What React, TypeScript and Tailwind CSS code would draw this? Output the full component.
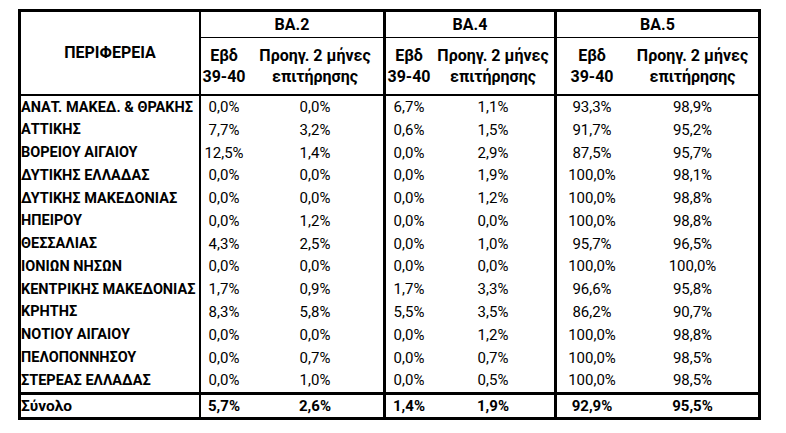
import React from "react";

const rows: string[][] = [
  ["ΑΝΑΤ. ΜΑΚΕΔ. & ΘΡΑΚΗΣ", "0,0%", "0,0%", "6,7%", "1,1%", "93,3%", "98,9%"],
  ["ΑΤΤΙΚΗΣ", "7,7%", "3,2%", "0,6%", "1,5%", "91,7%", "95,2%"],
  ["ΒΟΡΕΙΟΥ ΑΙΓΑΙΟΥ", "12,5%", "1,4%", "0,0%", "2,9%", "87,5%", "95,7%"],
  ["ΔΥΤΙΚΗΣ ΕΛΛΑΔΑΣ", "0,0%", "0,0%", "0,0%", "1,9%", "100,0%", "98,1%"],
  ["ΔΥΤΙΚΗΣ ΜΑΚΕΔΟΝΙΑΣ", "0,0%", "0,0%", "0,0%", "1,2%", "100,0%", "98,8%"],
  ["ΗΠΕΙΡΟΥ", "0,0%", "1,2%", "0,0%", "0,0%", "100,0%", "98,8%"],
  ["ΘΕΣΣΑΛΙΑΣ", "4,3%", "2,5%", "0,0%", "1,0%", "95,7%", "96,5%"],
  ["ΙΟΝΙΩΝ ΝΗΣΩΝ", "0,0%", "0,0%", "0,0%", "0,0%", "100,0%", "100,0%"],
  ["ΚΕΝΤΡΙΚΗΣ ΜΑΚΕΔΟΝΙΑΣ", "1,7%", "0,9%", "1,7%", "3,3%", "96,6%", "95,8%"],
  ["ΚΡΗΤΗΣ", "8,3%", "5,8%", "5,5%", "3,5%", "86,2%", "90,7%"],
  ["ΝΟΤΙΟΥ ΑΙΓΑΙΟΥ", "0,0%", "0,0%", "0,0%", "1,2%", "100,0%", "98,8%"],
  ["ΠΕΛΟΠΟΝΝΗΣΟΥ", "0,0%", "0,7%", "0,0%", "0,7%", "100,0%", "98,5%"],
  ["ΣΤΕΡΕΑΣ ΕΛΛΑΔΑΣ", "0,0%", "1,0%", "0,0%", "0,5%", "100,0%", "98,5%"],
];

const total = ["Σύνολο", "5,7%", "2,6%", "1,4%", "1,9%", "92,9%", "95,5%"];

const grid = "grid grid-cols-[180px_46px_139px_46px_125px_70px_131px]";

function ValueCells({ vals, bold }: { vals: string[]; bold?: boolean }) {
  const w = bold ? "font-bold" : "";
  return (
    <>
      <div className={`flex items-center border-r-2 border-black whitespace-nowrap font-bold ${bold ? "text-[15.5px]" : "text-[14.5px]"}`}>
        {vals[0]}
      </div>
      <div className={`flex items-center justify-center ${w}`}>{vals[1]}</div>
      <div className={`flex items-center justify-center border-r-[3px] border-black ${w}`}>{vals[2]}</div>
      <div className={`flex items-center justify-center ${w}`}>{vals[3]}</div>
      <div className={`flex items-center justify-center border-r-[3px] border-black ${w}`}>{vals[4]}</div>
      <div className={`flex items-center justify-center ${w}`}>{vals[5]}</div>
      <div className={`flex items-center justify-center ${w}`}>{vals[6]}</div>
    </>
  );
}

function SubHead() {
  return (
    <div className="flex flex-col items-center justify-center border-b-2 border-black font-bold leading-[21px]">
      <span>Εβδ</span>
      <span>39-40</span>
    </div>
  );
}

function SubHead2({ last }: { last?: boolean }) {
  return (
    <div
      className={`flex flex-col items-center justify-center border-b-2 border-black font-bold leading-[21px] overflow-hidden whitespace-nowrap ${
        last ? "" : "border-r-[3px]"
      }`}
    >
      <span>Προηγ. 2 μήνες</span>
      <span>επιτήρησης</span>
    </div>
  );
}

export default function App() {
  return (
    <div className="min-h-[433px] w-[786px] bg-white pl-[18px] pt-[9px] text-black font-['Roboto','Noto_Sans',sans-serif] text-[15px]">
      <div className="w-[743px] border-[3px] border-black">
        <div className={`${grid} grid-rows-[26px_58px] text-[16px]`}>
          <div className="row-span-2 flex items-center justify-center border-r-2 border-b-2 border-black font-bold">
            ΠΕΡΙΦΕΡΕΙΑ
          </div>
          <div className="col-span-2 flex items-center justify-center border-r-[3px] border-b border-black font-bold">
            BA.2
          </div>
          <div className="col-span-2 flex items-center justify-center border-r-[3px] border-b border-black font-bold">
            BA.4
          </div>
          <div className="col-span-2 flex items-center justify-center border-b border-black font-bold">
            BA.5
          </div>
          <SubHead />
          <SubHead2 />
          <SubHead />
          <SubHead2 />
          <SubHead />
          <SubHead2 last />
        </div>
        <div className="flex h-[296px] flex-col">
          {rows.map((r) => (
            <div key={r[0]} className={`${grid} flex-1`}>
              <ValueCells vals={r} />
            </div>
          ))}
        </div>
        <div className={`${grid} h-[25px] border-t-[3px] border-black`}>
          <ValueCells vals={total} bold />
        </div>
      </div>
    </div>
  );
}
